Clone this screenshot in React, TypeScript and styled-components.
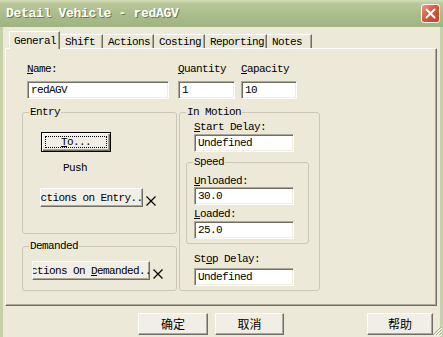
import React from "react";
import styled, { createGlobalStyle } from "styled-components";

const mono = `"Liberation Mono", "DejaVu Sans Mono", monospace`;
const cjk = `"Noto Sans CJK SC", "Noto Sans", sans-serif`;

const GlobalStyle = createGlobalStyle`
  html, body {
    margin: 0;
    padding: 0;
    background: #ece9d8;
  }
  body {
    font-family: ${mono};
  }
`;

const Window = styled.div`
  position: relative;
  width: 443px;
  height: 337px;
  overflow: hidden;
  display: flex;
  flex-direction: column;
  background: #ece9d8;
`;

const TitleBar = styled.div`
  flex: none;
  height: 27px;
  box-sizing: border-box;
  display: flex;
  align-items: center;
  justify-content: space-between;
  padding: 0 3px 0 6px;
  background: linear-gradient(
    to bottom,
    #d3dcb6 0%,
    #b8c798 14%,
    #aabc8a 55%,
    #a0b380 100%
  );
`;

const Title = styled.span`
  font: bold 13px/1 ${mono};
  letter-spacing: -0.3px;
  color: #fff;
  text-shadow: 1px 1px 0 #6a7a48;
`;

const CloseButton = styled.div`
  width: 17px;
  height: 17px;
  border: 1px solid #fff;
  border-radius: 3px;
  background: linear-gradient(135deg, #eb9a82 0%, #d65a3c 45%, #c0432a 100%);
  display: flex;
  align-items: center;
  justify-content: center;
`;

const Body = styled.div`
  flex: 1;
  display: flex;
  flex-direction: column;
  border-left: 3px solid #c5d1a8;
  border-right: 3px solid #c5d1a8;
  padding-top: 4px;
`;

const TabRow = styled.div`
  display: flex;
  align-items: flex-end;
  height: 17px;
  padding-left: 6px;
`;

const Tab = styled.div<{ $w: number; $active?: boolean }>`
  position: relative;
  z-index: ${(p) => (p.$active ? 1 : 0)};
  box-sizing: border-box;
  width: ${(p) => p.$w}px;
  height: ${(p) => (p.$active ? 18 : 14)}px;
  margin-bottom: ${(p) => (p.$active ? -1 : 0)}px;
  padding-left: 4px;
  display: flex;
  align-items: center;
  background: #ece9d8;
  border-top: 1px solid #fff;
  border-left: 1px solid ${(p) => (p.$active ? "#fff" : "transparent")};
  border-right: 1px solid #716f64;
  box-shadow: inset -1px 0 0 #aca899;
  font: 11px/12px ${mono};
  letter-spacing: -0.6px;
  color: #000;
`;

const Panel = styled.div`
  box-sizing: border-box;
  margin-left: 2px;
  width: 432px;
  height: 258px;
  border: 1px solid;
  border-color: #fff #716f64 #716f64 #fff;
  box-shadow: inset -1px -1px 0 #aca899;
  padding: 14px 0 0 16px;
`;

const TopRow = styled.div`
  display: flex;
  margin-left: 5px;
`;

const Field = styled.div<{ $gap?: number }>`
  display: flex;
  flex-direction: column;
  margin-right: ${(p) => p.$gap ?? 0}px;
`;

const Label = styled.div<{ $top?: number; $left?: number }>`
  margin: ${(p) => p.$top ?? 0}px 0 0 ${(p) => p.$left ?? 0}px;
  font: 11px/12px ${mono};
  letter-spacing: -0.6px;
  color: #000;
  white-space: nowrap;
`;

const TextBox = styled.input<{ $w: number; $top?: number; $left?: number }>`
  display: block;
  box-sizing: border-box;
  width: ${(p) => p.$w}px;
  height: 18px;
  margin: ${(p) => p.$top ?? 0}px 0 0 ${(p) => p.$left ?? 0}px;
  padding: 0 2px 0 3px;
  background: #fff;
  border: 1px solid;
  border-color: #aca899 #fff #fff #aca899;
  box-shadow: inset 1px 1px 0 #716f64, inset -1px -1px 0 #f1efe2;
  font: 11px/16px ${mono};
  letter-spacing: -0.6px;
  color: #000;
  outline: none;
`;

const GroupRow = styled.div`
  display: flex;
  align-items: flex-start;
  gap: 2px;
  margin-top: 7px;
`;

const Column = styled.div`
  display: flex;
  flex-direction: column;
  gap: 6px;
`;

const Group = styled.fieldset<{ $w: number; $h: number; $top?: number; $left?: number }>`
  box-sizing: border-box;
  width: ${(p) => p.$w}px;
  height: ${(p) => p.$h}px;
  min-width: 0;
  margin: ${(p) => p.$top ?? 0}px 0 0 ${(p) => p.$left ?? 0}px;
  padding: 0;
  border: 1px solid #cbc8b6;
  border-radius: 3px;
`;

const Legend = styled.legend`
  margin-left: 6px;
  padding: 0 1px;
  font: 11px/12px ${mono};
  letter-spacing: -0.6px;
  color: #000;
`;

const PushButton = styled.button<{ $w: number; $h: number; $top?: number; $left?: number }>`
  box-sizing: border-box;
  width: ${(p) => p.$w}px;
  height: ${(p) => p.$h}px;
  margin: ${(p) => p.$top ?? 0}px 0 0 ${(p) => p.$left ?? 0}px;
  padding: 0;
  display: flex;
  align-items: center;
  justify-content: center;
  overflow: hidden;
  white-space: nowrap;
  background: #f1efe5;
  border: 1px solid;
  border-color: #fff #716f64 #716f64 #fff;
  box-shadow: inset -1px -1px 0 #aca899;
  font: 11px/12px ${mono};
  letter-spacing: -0.6px;
  color: #000;
  flex: none;
`;

const DefaultButton = styled(PushButton)`
  position: relative;
  border: 1px solid #000;
  box-shadow: inset 1px 1px 0 #fff, inset -1px -1px 0 #716f64,
    inset -2px -2px 0 #aca899;

  &::after {
    content: "";
    position: absolute;
    inset: 3px;
    border: 1px dotted #000;
  }
`;

const ActionRow = styled.div<{ $top: number; $left: number }>`
  display: flex;
  align-items: flex-end;
  gap: 3px;
  margin: ${(p) => p.$top}px 0 0 ${(p) => p.$left}px;
`;

const CrossMark = styled.svg`
  flex: none;
  width: 10px;
  height: 10px;
  margin-bottom: 1px;
`;

const Footer = styled.div`
  display: flex;
  gap: 7px;
  margin-top: 7px;
  padding: 0 7px 0 135px;
`;

const FooterButton = styled.button<{ $w: number; $push?: boolean }>`
  box-sizing: border-box;
  width: ${(p) => p.$w}px;
  height: 22px;
  margin: 0 0 0 ${(p) => (p.$push ? "auto" : "0")};
  padding: 0;
  background: #f1efe5;
  border: 1px solid;
  border-color: #fff #716f64 #716f64 #fff;
  box-shadow: inset -1px -1px 0 #aca899;
  font: 12px/20px ${cjk};
  color: #000;
`;

const Grip = styled.svg`
  position: absolute;
  right: 1px;
  bottom: 1px;
  width: 12px;
  height: 12px;
`;

function Cross() {
  return (
    <CrossMark viewBox="0 0 10 10">
      <path d="M0.5 0.5 L9.5 9.5 M9.5 0.5 L0.5 9.5" stroke="#000" strokeWidth="1.2" fill="none" />
    </CrossMark>
  );
}

const tabs = [
  { label: "General", w: 51 },
  { label: "Shift", w: 43 },
  { label: "Actions", w: 51 },
  { label: "Costing", w: 51 },
  { label: "Reporting", w: 62 },
  { label: "Notes", w: 45 },
];

export default function App() {
  return (
    <>
      <GlobalStyle />
      <Window>
        <TitleBar>
          <Title>Detail Vehicle - redAGV</Title>
          <CloseButton>
            <svg width="11" height="11" viewBox="0 0 11 11">
              <path d="M1.5 1.5 L9.5 9.5 M9.5 1.5 L1.5 9.5" stroke="#fff" strokeWidth="2" strokeLinecap="round" />
            </svg>
          </CloseButton>
        </TitleBar>

        <Body>
          <TabRow>
            {tabs.map((t, i) => (
              <Tab key={t.label} $w={t.w} $active={i === 0}>
                {t.label}
              </Tab>
            ))}
          </TabRow>

          <Panel>
            <TopRow>
              <Field $gap={9}>
                <Label>
                  <u>N</u>ame:
                </Label>
                <TextBox $w={142} $top={6} defaultValue="redAGV" />
              </Field>
              <Field $gap={6}>
                <Label>
                  <u>Q</u>uantity
                </Label>
                <TextBox $w={57} $top={6} defaultValue="1" />
              </Field>
              <Field>
                <Label>
                  <u>C</u>apacity
                </Label>
                <TextBox $w={56} $top={6} defaultValue="10" />
              </Field>
            </TopRow>

            <GroupRow>
              <Column>
                <Group $w={155} $h={128}>
                  <Legend>Entry</Legend>
                  <DefaultButton $w={70} $h={20} $top={14} $left={18}>
                    <span>
                      <u>T</u>o...
                    </span>
                  </DefaultButton>
                  <Label $top={10} $left={40}>
                    Push
                  </Label>
                  <ActionRow $top={14} $left={17}>
                    <PushButton $w={103} $h={19}>
                      <span>Actions on Entry...</span>
                    </PushButton>
                    <Cross />
                  </ActionRow>
                </Group>

                <Group $w={155} $h={51}>
                  <Legend>Demanded</Legend>
                  <ActionRow $top={9} $left={9}>
                    <PushButton $w={118} $h={19}>
                      <span>
                        Actions On <u>D</u>emanded...
                      </span>
                    </PushButton>
                    <Cross />
                  </ActionRow>
                </Group>
              </Column>

              <Group $w={141} $h={185}>
                <Legend>In Motion</Legend>
                <Label $top={3} $left={14}>
                  <u>S</u>tart Delay:
                </Label>
                <TextBox $w={100} $top={1} $left={14} defaultValue="Undefined" />

                <Group $w={123} $h={88} $top={4} $left={6}>
                  <Legend>Speed</Legend>
                  <Label $top={7} $left={7}>
                    <u>U</u>nloaded:
                  </Label>
                  <TextBox $w={100} $left={7} defaultValue="30.0" />
                  <Label $top={3} $left={7}>
                    <u>L</u>oaded:
                  </Label>
                  <TextBox $w={100} $top={1} $left={7} defaultValue="25.0" />
                </Group>

                <Label $top={9} $left={14}>
                  St<u>o</u>p Delay:
                </Label>
                <TextBox $w={100} $top={3} $left={14} defaultValue="Undefined" />
              </Group>
            </GroupRow>
          </Panel>

          <Footer>
            <FooterButton $w={70}>确定</FooterButton>
            <FooterButton $w={69}>取消</FooterButton>
            <FooterButton $w={66} $push>
              帮助
            </FooterButton>
          </Footer>
        </Body>

        <Grip viewBox="0 0 12 12">
          <path d="M11 3 L3 11 M11 6 L6 11 M11 9 L9 11" stroke="#aca899" strokeWidth="1" />
          <path d="M12 4 L4 12 M12 7 L7 12 M12 10 L10 12" stroke="#fff" strokeWidth="1" />
        </Grip>
      </Window>
    </>
  );
}
